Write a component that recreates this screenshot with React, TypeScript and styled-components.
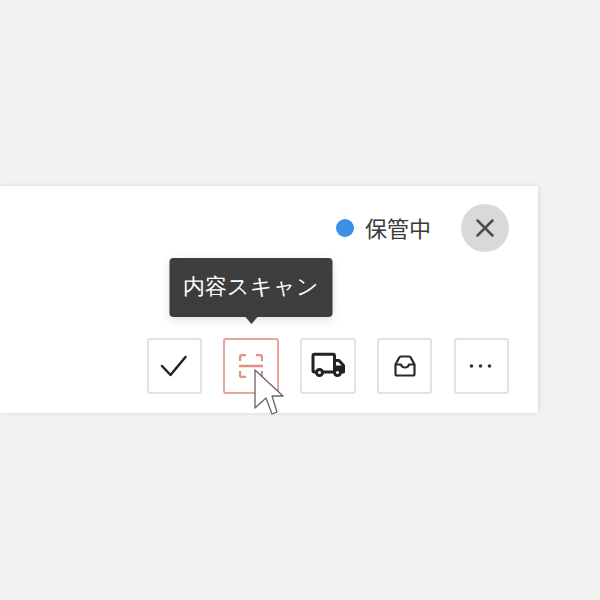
import React from 'react'
import styled, { createGlobalStyle } from 'styled-components'
import { X } from 'lucide-react'

const GlobalStyle = createGlobalStyle`
  html, body {
    margin: 0;
    padding: 0;
    background: #f2f2f2;
    font-family: "Noto Sans CJK JP", "Noto Sans", sans-serif;
  }
`

const Page = styled.div`
  width: 600px;
  height: 600px;
  padding-top: 186px;
  box-sizing: border-box;
  overflow: hidden;
`

const Panel = styled.div`
  width: 538px;
  height: 227px;
  box-sizing: border-box;
  padding: 18px 29px 19px 0;
  background: #fff;
  box-shadow: 1px 0 5px rgba(0, 0, 0, 0.1);
  display: flex;
  flex-direction: column;
  justify-content: space-between;
`

const Header = styled.div`
  display: flex;
  justify-content: flex-end;
  align-items: center;
`

const Status = styled.div`
  display: flex;
  align-items: center;
  gap: 11px;
  margin-right: 30px;
  padding-bottom: 2px;
  font-size: 22px;
  line-height: 46px;
  color: #3a3a3a;
`

const Dot = styled.span`
  width: 18px;
  height: 18px;
  margin-top: 2px;
  border-radius: 50%;
  background: #3a90e5;
`

const CloseButton = styled.button`
  width: 48px;
  height: 48px;
  padding: 0;
  border: none;
  border-radius: 50%;
  background: #d9d9d9;
  color: #4c4c4c;
  display: flex;
  align-items: center;
  justify-content: center;
`

const Actions = styled.div`
  display: flex;
  justify-content: flex-end;
  gap: 21.25px;
`

const ActionButton = styled.button<{ $active?: boolean }>`
  position: relative;
  width: 55.5px;
  height: 56px;
  padding: 0;
  box-sizing: border-box;
  background: #fff;
  border: 2px solid ${(p) => (p.$active ? '#e8a59c' : '#e2e2e2')};
  border-radius: 3px;
  display: flex;
  align-items: center;
  justify-content: center;
`

const Tooltip = styled.div`
  position: absolute;
  left: 50%;
  bottom: 75px;
  transform: translateX(-50%);
  width: 163px;
  height: 59px;
  border-radius: 4px;
  background: #3d3d3d;
  box-shadow: 0 3px 10px rgba(0, 0, 0, 0.12);
  color: #fff;
  font-size: 22px;
  line-height: 57px;
  text-align: center;
  white-space: nowrap;

  &::after {
    content: '';
    position: absolute;
    left: 50%;
    top: 100%;
    margin-left: -6px;
    border-left: 6px solid transparent;
    border-right: 6px solid transparent;
    border-top: 7px solid #3d3d3d;
  }
`

const Cursor = styled.svg`
  position: absolute;
  left: 29px;
  top: 29px;
`

const CheckIcon = () => (
  <svg width="28" height="24" viewBox="0 0 28 24" fill="none" stroke="#222" strokeWidth="2.500" strokeLinecap="round" strokeLinejoin="round">
    <path d="M2 12l8.500 9L25.500 3" />
  </svg>
)

const ScanIcon = () => (
  <svg width="24" height="24" viewBox="0 0 24 24" fill="none" stroke="#e58f86" strokeWidth="2.200">
    <path d="M1.100 7V2.600a1.500 1.500 0 0 1 1.500-1.500H7" />
    <path d="M17 1.100h4.400a1.500 1.500 0 0 1 1.500 1.500V7" />
    <path d="M1.100 17v4.400a1.500 1.500 0 0 0 1.500 1.500H7" />
    <path d="M17 22.900h4.400a1.500 1.500 0 0 0 1.500-1.500V17" />
    <path d="M0 12h24" strokeWidth="2.500" />
  </svg>
)

const TruckIcon = () => (
  <svg width="34" height="28" viewBox="0 0 34 28" fill="none" stroke="#222" strokeWidth="3" strokeLinejoin="round">
    <path d="M5 20H3.500a1.500 1.500 0 0 1-1.500-1.500V3.750a1.500 1.500 0 0 1 1.500-1.500H22a1.500 1.500 0 0 1 1.500 1.500V20H12" />
    <path d="M23.500 8.500h4.500l4.500 5V20h-3M23.500 20h0" />
    <path d="M23.500 13.500h9V20h-9z" fill="#222" stroke="none" />
    <circle cx="8.500" cy="20.500" r="3" fill="#fff" />
    <circle cx="26.500" cy="20.500" r="3" fill="#fff" />
  </svg>
)

const InboxIcon = () => (
  <svg width="22" height="22" viewBox="0 0 22 22" fill="none" stroke="#2a2a2a" strokeWidth="2.200" strokeLinejoin="round">
    <path d="M1.500 9.500l3.600-6.800a2 2 0 0 1 1.800-1.200h8.200a2 2 0 0 1 1.800 1.200l3.600 6.800" />
    <path d="M1.500 9.500h5.500c0.500 2 2 3 4 3s3.500-1 4-3h5.500v9.500a1.500 1.500 0 0 1-1.500 1.500H3a1.500 1.500 0 0 1-1.500-1.500z" />
  </svg>
)

const MoreIcon = () => (
  <svg width="24" height="6" viewBox="0 0 24 6" fill="#333">
    <circle cx="2.500" cy="3" r="1.800" />
    <circle cx="11.500" cy="3" r="1.800" />
    <circle cx="20.500" cy="3" r="1.800" />
  </svg>
)

export default function App() {
  return (
    <Page>
      <GlobalStyle />
      <Panel>
        <Header>
          <Status>
            <Dot />
            保管中
          </Status>
          <CloseButton>
            <X size={30} strokeWidth={2} />
          </CloseButton>
        </Header>
        <Actions>
          <ActionButton>
            <CheckIcon />
          </ActionButton>
          <ActionButton $active>
            <ScanIcon />
            <Tooltip>内容スキャン</Tooltip>
            <Cursor width="32" height="48" viewBox="0 0 32 48">
              <path
                d="M1 1L29 27H18L23 43L18 45L12 29L1 39Z"
                fill="#fff"
                stroke="#666"
                strokeWidth="1.300"
                strokeLinejoin="round"
              />
            </Cursor>
          </ActionButton>
          <ActionButton>
            <TruckIcon />
          </ActionButton>
          <ActionButton>
            <InboxIcon />
          </ActionButton>
          <ActionButton>
            <MoreIcon />
          </ActionButton>
        </Actions>
      </Panel>
    </Page>
  )
}
